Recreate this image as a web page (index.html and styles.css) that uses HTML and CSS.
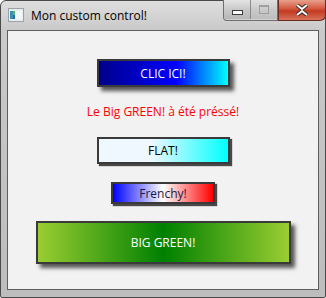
FILE: index.html
```html
<!DOCTYPE html>
<html lang="fr">
<head>
    <meta charset="UTF-8">
    <title>Mon custom control!</title>
    <link rel="stylesheet" href="styles.css">
</head>
<body>
    <div class="window">
        <div class="titlebar">
            <svg class="app-icon" width="16" height="14" viewBox="0 0 16 14">
                <rect x="0.5" y="0.5" width="15" height="13" fill="#e8eef0" stroke="#9aa4a8"/>
                <rect x="2" y="3" width="3" height="8" fill="#3a8fb8"/>
                <rect x="5" y="3" width="2" height="4" fill="#5cb85c"/>
                <rect x="5" y="7" width="2" height="4" fill="#2a6fa0"/>
                <rect x="8" y="3" width="6" height="8" fill="#f4f8f8"/>
            </svg>
            <span class="title">Mon custom control!</span>
            <div class="caption-buttons">
                <div class="cap-group">
                    <div class="cap cap-min"><span class="glyph-min"></span></div>
                    <div class="cap cap-max"><span class="glyph-max"></span></div>
                </div>
                <div class="cap cap-close">
                    <svg width="14" height="12" viewBox="0 0 14 12">
                        <path d="M2 1 L7 5 L12 1 M2 11 L7 7 L12 11" stroke="#3b2a2a" stroke-width="4" fill="none"/>
                        <path d="M2 1 L7 5 L12 1 M2 11 L7 7 L12 11" stroke="#fff" stroke-width="2" fill="none"/>
                    </svg>
                </div>
            </div>
        </div>
        <div class="client">
            <button class="fancy btn-clic">CLIC ICI!</button>
            <div class="status">Le Big GREEN! à été préssé!</div>
            <button class="fancy btn-flat">FLAT!</button>
            <button class="fancy btn-frenchy">Frenchy!</button>
            <button class="fancy btn-green">BIG GREEN!</button>
        </div>
    </div>
</body>
</html>
```

FILE: styles.css
```css
html, body {
    margin: 0;
    padding: 0;
}
body {
    width: 326px;
    height: 298px;
    font-family: "Noto Sans", "Open Sans", sans-serif;
    font-size: 12px;
    background: #fff;
}
.window {
    box-sizing: border-box;
    width: 326px;
    height: 298px;
    border: 1px solid #4a4a4a;
    border-radius: 6px 6px 2px 2px;
    background: linear-gradient(#dedede, #c9c9c9 30px, #bdbdbd);
    padding: 0 6px 7px 6px;
    display: flex;
    flex-direction: column;
}
.titlebar {
    height: 28px;
    display: flex;
    align-items: flex-start;
    position: relative;
}
.app-icon {
    margin: 7px 0 0 1px;
}
.title {
    margin: 6px 0 0 7px;
    font-family: "Open Sans", "Noto Sans", sans-serif;
    font-size: 12px;
    color: #000;
}
.caption-buttons {
    position: absolute;
    right: -7px;
    top: -1px;
    display: flex;
}
.cap-group {
    display: flex;
    border: 1px solid #6f6f6f;
    border-top: none;
    border-radius: 0 0 0 4px;
    overflow: hidden;
}
.cap {
    height: 19px;
    display: flex;
    align-items: center;
    justify-content: center;
}
.cap-min {
    width: 26px;
    background: linear-gradient(#e4e4e4, #c8c8c8 50%, #b8b8b8);
    border-right: 1px solid #8a8a8a;
}
.cap-max {
    width: 26px;
    background: linear-gradient(#e0e0e0, #cacaca 50%, #bdbdbd);
}
.glyph-min {
    width: 9px;
    height: 3px;
    margin-top: 5px;
    background: #fff;
    border: 1px solid #3c3c3c;
}
.glyph-max {
    width: 8px;
    height: 6px;
    border: 1px solid #9e9e9e;
    border-top-width: 2px;
}
.cap-close {
    width: 46px;
    height: 20px;
    border: 1px solid #6b2a20;
    border-top: none;
    border-radius: 0 0 6px 0;
    background: linear-gradient(#e8a08c, #d2563c 45%, #c23a22 55%, #d8705a);
}
.client {
    flex: 1;
    margin-top: 1px;
    border: 1px solid #5e5e5e;
    background: #f2f2f2;
    display: flex;
    flex-direction: column;
    align-items: center;
}
.fancy {
    box-sizing: border-box;
    border: 2px solid #3a3a3a;
    padding: 0;
    font-family: "Open Sans", "Noto Sans", sans-serif;
    font-size: 12px;
    display: block;
}
.btn-clic {
    margin-top: 28px;
    width: 133px;
    height: 28px;
    color: #fff;
    background: linear-gradient(90deg, #00008b, #0000ff 60%, #00ffff);
    box-shadow: 4px 4px 4px rgba(0, 0, 0, 0.65);
}
.status {
    margin-top: 17px;
    color: #f00;
    font-family: "Open Sans", "Noto Sans", sans-serif;
    font-size: 12px;
    line-height: 16px;
}
.btn-flat {
    margin-top: 17px;
    width: 133px;
    height: 27px;
    color: #000;
    background: linear-gradient(90deg, #f0f8ff, #f0f8ff 40%, #00ffff);
    box-shadow: 2px 2px 1px rgba(0, 0, 0, 0.7);
}
.btn-frenchy {
    margin-top: 18px;
    width: 104px;
    height: 22px;
    color: #1a1a40;
    background: linear-gradient(90deg, #0000ff, #ffffff 50%, #ff0000);
    box-shadow: 2px 2px 1px rgba(0, 0, 0, 0.7);
}
.btn-green {
    margin-top: 17px;
    width: 255px;
    height: 43px;
    color: #fff;
    background: linear-gradient(90deg, #9acd32, #008000 50%, #9acd32);
    box-shadow: 4px 4px 4px rgba(0, 0, 0, 0.65);
}
```
